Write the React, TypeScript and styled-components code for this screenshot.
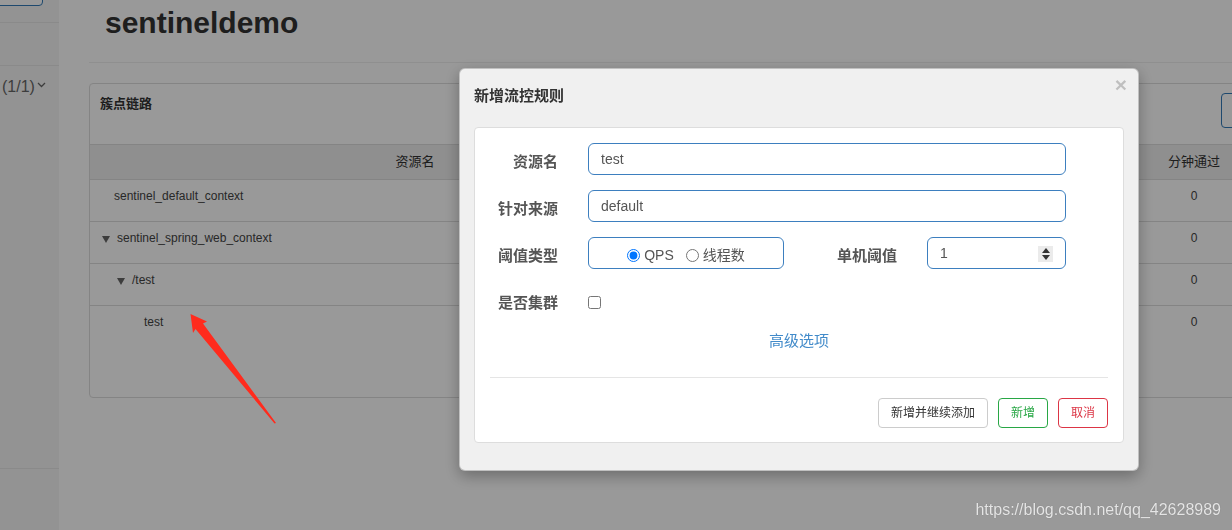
import React from "react";
import styled, { createGlobalStyle } from "styled-components";

const FONT = `"Liberation Sans", "Noto Sans CJK SC", Arial, sans-serif`;

const GlobalStyle = createGlobalStyle`
  html, body {
    margin: 0;
    padding: 0;
    width: 1232px;
    height: 530px;
    overflow: hidden;
    background: #fff;
  }
  body {
    font-family: ${FONT};
    color: #333;
  }
  *, *::before, *::after { box-sizing: border-box; }
`;

const Page = styled.div`
  display: flex;
  width: 1232px;
  height: 530px;
`;

/* ---------- sidebar ---------- */
const Sidebar = styled.aside`
  width: 59px;
  flex: none;
  background: #f6f6f6;
  display: flex;
  flex-direction: column;
  overflow: hidden;
`;

const SideSearch = styled.div`
  flex: none;
  width: 53px;
  height: 30px;
  margin: -24px 0 16px -10px;
  border: 1px solid #337ab7;
  border-radius: 4px;
  background: #fff;
`;

const SideItem = styled.div<{ $h: number }>`
  flex: none;
  height: ${(p) => p.$h}px;
  border-top: 1px solid #e7e7e7;
  padding: 12px 0 0 2px;
  display: flex;
  align-items: flex-start;
  gap: 2px;
  font: 16px/18px ${FONT};
  color: #666;
  white-space: nowrap;
`;

const Chevron = styled.svg`
  margin-top: 4px;
  flex: none;
`;

/* ---------- main ---------- */
const Main = styled.main`
  flex: 1;
  min-width: 0;
  padding-left: 30px;
  overflow: hidden;
`;

const PageHeader = styled.div`
  padding: 6px 0 23px 16px;
  border-bottom: 1px solid #eee;
`;

const Title = styled.h1`
  margin: 0;
  font: bold 30px/33px ${FONT};
  color: #333;
`;

const Panel = styled.section`
  margin-top: 20px;
  width: 1200px;
  border: 1px solid #ddd;
  border-radius: 4px;
  background: #fff;
`;

const PanelHeading = styled.div`
  height: 61px;
  padding: 10px;
  border-bottom: 1px solid #ddd;
  display: flex;
  justify-content: space-between;
  align-items: flex-start;
`;

const HeadingTitle = styled.h3`
  margin: 0;
  font: bold 13px/20px ${FONT};
  color: #333;
`;

const RefreshButton = styled.button`
  width: 57px;
  height: 35px;
  margin-top: -1px;
  padding: 0;
  border: 1px solid #337ab7;
  border-radius: 4px;
  background: #fff;
`;

const COLS = "650px repeat(4, 104px) 76px 1fr";

const HeaderRow = styled.div`
  display: grid;
  grid-template-columns: ${COLS};
  height: 35px;
  background: #eee;
  border-bottom: 1px solid #ddd;
`;

const HeadCell = styled.div`
  text-align: center;
  font: 13px/34px ${FONT};
  color: #333;
  white-space: nowrap;
`;

const BodyRow = styled.div`
  display: grid;
  grid-template-columns: ${COLS};
  height: 42px;
  border-bottom: 1px solid #ddd;
  &:last-child {
    border-bottom: none;
    height: 41px;
  }
`;

const Cell = styled.div`
  padding-top: 7px;
  text-align: center;
  font: 12px/18px ${FONT};
  color: #444;
`;

const NameCell = styled.div<{ $indent: number }>`
  padding: 7px 0 0 ${(p) => p.$indent}px;
  display: flex;
  align-items: flex-start;
  gap: 7px;
  font: 12px/18px ${FONT};
  color: #444;
`;

const Toggle = styled.span`
  flex: none;
  margin-top: 7px;
  width: 0;
  height: 0;
  border-left: 4px solid transparent;
  border-right: 4px solid transparent;
  border-top: 7px solid #666;
`;

const PanelFooter = styled.div`
  height: 50px;
`;

/* ---------- modal ---------- */
const Backdrop = styled.div`
  position: fixed;
  inset: 0;
  background: rgba(0, 0, 0, 0.4);
  z-index: 10;
`;

const Modal = styled.div`
  position: absolute;
  left: 459px;
  top: 68px;
  width: 680px;
  padding: 0 14px 27px;
  background: #f0f0f0;
  border: 1px solid rgba(0, 0, 0, 0.2);
  border-radius: 6px;
  box-shadow: 0 5px 15px rgba(0, 0, 0, 0.3);
`;

const ModalHeader = styled.div`
  height: 58px;
  display: flex;
  justify-content: space-between;
  align-items: flex-start;
`;

const ModalTitle = styled.h4`
  margin: 0;
  padding-top: 17px;
  font: bold 15px/20px ${FONT};
  color: #333;
`;

const CloseButton = styled.button`
  margin: 5px -3px 0 0;
  padding: 0;
  border: none;
  background: transparent;
  font: bold 21px/21px ${FONT};
  color: #000;
  opacity: 0.2;
`;

const Card = styled.div`
  background: #fff;
  border: 1px solid #ddd;
  border-radius: 4px;
  padding: 15px 0 14px;
`;

const Form = styled.div`
  display: flex;
  flex-direction: column;
  gap: 15px;
`;

const FormRow = styled.div<{ $cols: string }>`
  display: grid;
  grid-template-columns: ${(p) => p.$cols};
  height: 32px;
  align-items: center;
`;

const Label = styled.label`
  padding: 5px 30px 0 0;
  text-align: right;
  font: bold 15px/20px ${FONT};
  color: #555;
  white-space: nowrap;
`;

const TextInput = styled.input`
  width: 100%;
  height: 32px;
  padding: 0 12px;
  border: 1px solid #3d7fbf;
  border-radius: 6px;
  background: #fff;
  font: 14px ${FONT};
  color: #555;
  outline: none;
`;

const RadioBox = styled.div`
  height: 32px;
  padding-top: 4px;
  border: 1px solid #3d7fbf;
  border-radius: 6px;
  display: flex;
  justify-content: center;
  align-items: center;
  gap: 12px;
`;

const RadioOption = styled.label`
  display: flex;
  align-items: center;
  gap: 4px;
  font: 14px/16px ${FONT};
  color: #555;
`;

const Radio = styled.input`
  margin: 0;
  width: 13px;
  height: 13px;
`;

const NumberBox = styled.div`
  height: 32px;
  padding: 0 12px;
  border: 1px solid #3d7fbf;
  border-radius: 6px;
  display: flex;
  justify-content: space-between;
  align-items: center;
  font: 14px/16px ${FONT};
  color: #555;
`;

const Spinner = styled.span`
  width: 15px;
  height: 16px;
  margin-top: 1px;
  background: #ebebeb;
  display: flex;
  flex-direction: column;
  align-items: center;
  justify-content: center;
  gap: 2px;
`;

const SpinArrow = styled.span<{ $up?: boolean }>`
  width: 0;
  height: 0;
  border-left: 4px solid transparent;
  border-right: 4px solid transparent;
  ${(p) =>
    p.$up ? "border-bottom: 5px solid #333;" : "border-top: 5px solid #333;"}
`;

const Checkbox = styled.input`
  margin: 4px 0 0 0;
  width: 13px;
  height: 13px;
`;

const AdvancedLink = styled.a`
  align-self: center;
  font: 15px/20px ${FONT};
  color: #428bca;
  text-decoration: none;
`;

const Divider = styled.div`
  margin: 26px 15px 0 15px;
  border-top: 1px solid #e5e5e5;
`;

const Footer = styled.div`
  margin-top: 20px;
  padding-right: 15px;
  display: flex;
  justify-content: flex-end;
  gap: 10px;
`;

const VARIANTS = {
  default: { c: "#333", b: "#ccc" },
  success: { c: "#28a745", b: "#28a745" },
  danger: { c: "#dc3545", b: "#dc3545" },
};

const Button = styled.button<{ $variant: keyof typeof VARIANTS }>`
  height: 30px;
  padding: 0 12px;
  border: 1px solid ${(p) => VARIANTS[p.$variant].b};
  border-radius: 4px;
  background: #fff;
  color: ${(p) => VARIANTS[p.$variant].c};
  font: 12px/28px ${FONT};
`;

/* ---------- annotation ---------- */
const Annotation = styled.div`
  position: fixed;
  inset: 0;
  z-index: 20;
  pointer-events: none;
`;

const Watermark = styled.div`
  position: absolute;
  top: 501px;
  right: 11px;
  font: 16px/18px ${FONT};
  color: rgba(255, 255, 255, 0.82);
  text-shadow: 0 0 1px rgba(0, 0, 0, 0.35);
`;

type Row = { name: string; level: number; toggle: boolean };

const rows: Row[] = [
  { name: "sentinel_default_context", level: 0, toggle: false },
  { name: "sentinel_spring_web_context", level: 0, toggle: true },
  { name: "/test", level: 1, toggle: true },
  { name: "test", level: 2, toggle: false },
];

const headers = ["资源名", "通过QPS", "拒绝QPS", "并发数", "平均RT", "分钟通过"];

export default function App() {
  return (
    <>
      <GlobalStyle />
      <Page>
        <Sidebar>
          <SideSearch />
          <SideItem $h={43} />
          <SideItem $h={403}>
            (1/1)
            <Chevron width="9" height="6" viewBox="0 0 9 6">
              <polyline points="1,1 4.5,4.5 8,1" fill="none" stroke="#666" strokeWidth="1.3" />
            </Chevron>
          </SideItem>
          <SideItem $h={62} />
        </Sidebar>
        <Main>
          <PageHeader>
            <Title>sentineldemo</Title>
          </PageHeader>
          <Panel>
            <PanelHeading>
              <HeadingTitle>簇点链路</HeadingTitle>
              <RefreshButton aria-label="刷新" />
            </PanelHeading>
            <HeaderRow>
              {headers.map((h) => (
                <HeadCell key={h}>{h}</HeadCell>
              ))}
            </HeaderRow>
            <div>
              {rows.map((r) => (
                <BodyRow key={r.name + r.level}>
                  <NameCell $indent={r.toggle ? 12 + 15 * r.level : 24 + 15 * r.level}>
                    {r.toggle && <Toggle />}
                    {r.name}
                  </NameCell>
                  {headers.slice(1).map((h) => (
                    <Cell key={h}>0</Cell>
                  ))}
                </BodyRow>
              ))}
            </div>
            <PanelFooter />
          </Panel>
        </Main>
      </Page>

      <Backdrop>
        <Modal>
          <ModalHeader>
            <ModalTitle>新增流控规则</ModalTitle>
            <CloseButton>×</CloseButton>
          </ModalHeader>
          <Card>
            <Form>
              <FormRow $cols="113px 478px">
                <Label>资源名</Label>
                <TextInput readOnly value="test" />
              </FormRow>
              <FormRow $cols="113px 478px">
                <Label>针对来源</Label>
                <TextInput readOnly value="default" />
              </FormRow>
              <FormRow $cols="113px 196px 143px 139px">
                <Label>阈值类型</Label>
                <RadioBox>
                  <RadioOption>
                    <Radio type="radio" name="grade" defaultChecked />
                    QPS
                  </RadioOption>
                  <RadioOption>
                    <Radio type="radio" name="grade" />
                    线程数
                  </RadioOption>
                </RadioBox>
                <Label>单机阈值</Label>
                <NumberBox>
                  1
                  <Spinner>
                    <SpinArrow $up />
                    <SpinArrow />
                  </Spinner>
                </NumberBox>
              </FormRow>
              <FormRow $cols="113px 13px">
                <Label>是否集群</Label>
                <Checkbox type="checkbox" />
              </FormRow>
              <AdvancedLink>高级选项</AdvancedLink>
            </Form>
            <Divider />
            <Footer>
              <Button $variant="default">新增并继续添加</Button>
              <Button $variant="success">新增</Button>
              <Button $variant="danger">取消</Button>
            </Footer>
          </Card>
        </Modal>
      </Backdrop>

      <Annotation>
        <svg width="1232" height="530" viewBox="0 0 1232 530">
          <polygon
            points="190.5,314 207,321.5 203,323.5 276,423 274.5,423.5 195.5,329 193,333"
            fill="#ff2b1d"
          />
        </svg>
        <Watermark>https://blog.csdn.net/qq_42628989</Watermark>
      </Annotation>
    </>
  );
}
